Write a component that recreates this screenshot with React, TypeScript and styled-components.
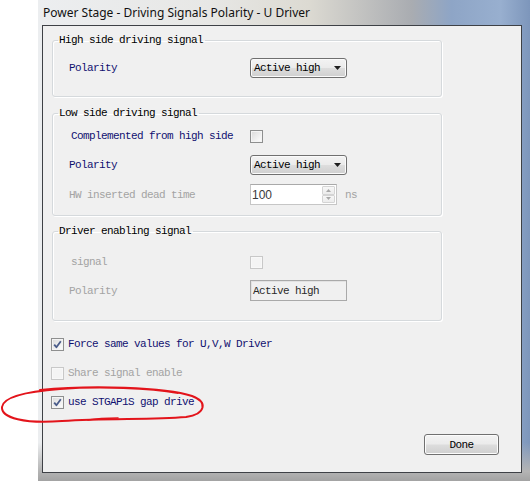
import styled, { createGlobalStyle } from "styled-components";

const GlobalStyle = createGlobalStyle`
  html, body {
    margin: 0;
    padding: 0;
    background: #ffffff;
    overflow: hidden;
  }
`;

const MONO = `"Liberation Mono", "DejaVu Sans Mono", monospace`;

export default function App() {
  return (
    <>
      <GlobalStyle />
      <Screen>
        <Window>
          <TitleBar>Power Stage - Driving Signals Polarity - U Driver</TitleBar>
          <Client>
            <GroupBox $pt={12} $pb={18}>
              <Legend>High side driving signal</Legend>
              <Rows $gap={9}>
                <Row>
                  <Label>Polarity</Label>
                  <Dropdown>
                    <span>Active high</span>
                    <Arrow />
                  </Dropdown>
                </Row>
              </Rows>
            </GroupBox>

            <GroupBox $pt={7} $pb={11} $mt={10}>
              <Legend>Low side driving signal</Legend>
              <Rows $gap={9}>
                <Row>
                  <Label $indent={2}>Complemented from high side</Label>
                  <CheckBox />
                </Row>
                <Row>
                  <Label>Polarity</Label>
                  <Dropdown>
                    <span>Active high</span>
                    <Arrow />
                  </Dropdown>
                </Row>
                <Row>
                  <Label $disabled>HW inserted dead time</Label>
                  <SpinWrap>
                    <SpinBox>
                      <SpinValue>100</SpinValue>
                      <SpinButtons>
                        <SpinButton>
                          <svg width="5" height="3" viewBox="0 0 5 3">
                            <path d="M0 3 L2.5 0 L5 3 Z" fill="#a8a8a8" />
                          </svg>
                        </SpinButton>
                        <SpinButton>
                          <svg width="5" height="3" viewBox="0 0 5 3">
                            <path d="M0 0 L2.5 3 L5 0 Z" fill="#a8a8a8" />
                          </svg>
                        </SpinButton>
                      </SpinButtons>
                    </SpinBox>
                    <Unit>ns</Unit>
                  </SpinWrap>
                </Row>
              </Rows>
            </GroupBox>

            <GroupBox $pt={15} $pb={20} $mt={9}>
              <Legend>Driver enabling signal</Legend>
              <Rows $gap={8}>
                <Row>
                  <Label $disabled $indent={2}>
                    signal
                  </Label>
                  <CheckBox $disabled />
                </Row>
                <Row>
                  <Label $disabled>Polarity</Label>
                  <ReadOnlyBox>Active high</ReadOnlyBox>
                </Row>
              </Rows>
            </GroupBox>

            <CheckList>
              <CheckRow>
                <CheckBox $checked>
                  <Tick />
                </CheckBox>
                <CheckText>Force same values for U,V,W Driver</CheckText>
              </CheckRow>
              <CheckRow>
                <CheckBox $disabled />
                <CheckText $disabled>Share signal enable</CheckText>
              </CheckRow>
              <CheckRow>
                <CheckBox $checked>
                  <Tick />
                </CheckBox>
                <CheckText>use STGAP1S gap drive</CheckText>
              </CheckRow>
            </CheckList>

            <ButtonRow>
              <Button>Done</Button>
            </ButtonRow>
          </Client>
        </Window>
        <Scribble width="210" height="50" viewBox="0 0 210 50">
          <path
            d="M40 6 C 90 1, 165 3, 192 12 C 208 18, 206 30, 186 33 C 150 36, 110 34, 62 37 C 25 40, 1 34, 2 23 C 3 14, 20 8, 60 5 C 100 2, 150 4, 178 9"
            fill="none"
            stroke="#e3141b"
            strokeWidth="2"
            strokeLinecap="round"
          />
          <path
            d="M88 36 C 100 34, 110 34, 118 34"
            fill="none"
            stroke="#e3141b"
            strokeWidth="1.6"
            strokeLinecap="round"
          />
        </Scribble>
      </Screen>
    </>
  );
}

function Arrow() {
  return (
    <svg width="7" height="4" viewBox="0 0 7 4">
      <path d="M0 0 L7 0 L3.5 4 Z" fill="#1e1e1e" />
    </svg>
  );
}

function Tick() {
  return (
    <svg width="11" height="11" viewBox="0 0 11 11">
      <path
        d="M2.2 5.6 L4.4 8.2 L8.8 2.2"
        fill="none"
        stroke="#4a5c8a"
        strokeWidth="1.8"
        strokeLinejoin="round"
      />
    </svg>
  );
}

const Screen = styled.div`
  position: relative;
  display: flex;
  width: 530px;
  height: 481px;
  padding-left: 38px;
  box-sizing: border-box;
`;

const Window = styled.div`
  display: flex;
  flex-direction: column;
  width: 492px;
  height: 481px;
  padding: 0 8px 8px 4px;
  box-sizing: border-box;
  background:
    linear-gradient(to bottom, rgba(255, 255, 255, 0) 92%, #b4b4b4 98%, #a3a3a3 100%),
    linear-gradient(
      to right,
      #eceef0 0%,
      #e7e7e5 35%,
      #dcdad2 55%,
      #c4c4c2 65%,
      #a9acb1 76%,
      #8ea5c6 84%,
      #98afcf 94%,
      #7d96bb 100%
    );
`;

const TitleBar = styled.div`
  display: flex;
  align-items: center;
  height: 25px;
  padding-left: 1px;
  font-family: "Noto Sans", "Open Sans", sans-serif;
  font-size: 12px;
  color: #111;
  white-space: nowrap;
`;

const Client = styled.div`
  display: flex;
  flex-direction: column;
  width: 480px;
  height: 448px;
  box-sizing: border-box;
  padding: 8px 22px 0 8px;
  border: 1px solid #3e4146;
  background: #f0f0f0;
  font-family: ${MONO};
  font-size: 11px;
  letter-spacing: -0.6px;
`;

const GroupBox = styled.fieldset<{ $pt: number; $pb: number; $mt?: number }>`
  width: 390px;
  box-sizing: border-box;
  margin: ${(p) => p.$mt ?? 0}px 0 0 1px;
  padding: ${(p) => p.$pt}px 0 ${(p) => p.$pb}px 0;
  border: 1px solid #d5d9dc;
  border-radius: 3px;
  box-shadow: inset 1px 1px 0 #ffffff, 1px 1px 0 #ffffff;
`;

const Legend = styled.legend`
  margin-left: 5px;
  padding: 0 2px 0 1px;
  height: 12px;
  line-height: 12px;
  color: #000;
`;

const Rows = styled.div<{ $gap: number }>`
  display: flex;
  flex-direction: column;
  gap: ${(p) => p.$gap}px;
  padding-left: 16px;
`;

const Row = styled.div`
  display: grid;
  grid-template-columns: 181px auto;
  align-items: center;
  height: 20px;
`;

const Label = styled.div<{ $disabled?: boolean; $indent?: number }>`
  padding-left: ${(p) => p.$indent ?? 0}px;
  color: ${(p) => (p.$disabled ? "#a3a3a3" : "#101070")};
  white-space: nowrap;
`;

const Dropdown = styled.div`
  display: flex;
  align-items: center;
  justify-content: space-between;
  width: 97px;
  height: 20px;
  box-sizing: border-box;
  padding: 0 5px 0 3px;
  border: 1px solid #707070;
  border-radius: 3px;
  background: linear-gradient(#f3f3f3 0%, #ebebeb 48%, #dddddd 52%, #cfcfcf 100%);
  box-shadow: inset 0 0 0 1px #fbfbfb;
  color: #000;
`;

const ReadOnlyBox = styled.div`
  display: flex;
  align-items: center;
  width: 97px;
  height: 21px;
  box-sizing: border-box;
  padding-left: 2px;
  border: 1px solid #a9a9a9;
  background: #f0f0f0;
  box-shadow: inset 1px 1px 0 #e2e2e2;
  color: #2a2a2a;
`;

const SpinWrap = styled.div`
  display: flex;
  align-items: center;
  gap: 8px;
`;

const SpinBox = styled.div`
  display: flex;
  width: 87px;
  height: 21px;
  box-sizing: border-box;
  border: 1px solid #c6c6c6;
  border-top-color: #a9a9a9;
  background: #ffffff;
`;

const SpinValue = styled.div`
  flex: 1;
  display: flex;
  align-items: center;
  padding-left: 1px;
  font-family: "Liberation Sans", Arial, sans-serif;
  font-size: 12px;
  letter-spacing: 0;
  color: #3a3a3a;
`;

const SpinButtons = styled.div`
  display: flex;
  flex-direction: column;
  width: 14px;
  padding: 1px 1px 1px 0;
  box-sizing: border-box;
`;

const SpinButton = styled.div`
  flex: 1;
  display: flex;
  align-items: center;
  justify-content: center;
  border: 1px solid #d4d4d4;
  border-radius: 1px;
  background: linear-gradient(#f7f7f7, #ececec);
`;

const Unit = styled.span`
  color: #a3a3a3;
`;

const CheckBox = styled.div<{ $checked?: boolean; $disabled?: boolean }>`
  display: flex;
  align-items: center;
  justify-content: center;
  width: 13px;
  height: 13px;
  box-sizing: border-box;
  border: 1px solid ${(p) => (p.$disabled ? "#c8c8c8" : "#8e8f8f")};
  background: ${(p) =>
    p.$disabled
      ? "#f4f4f4"
      : "linear-gradient(135deg, #dadada 0%, #f0f0f0 60%, #ffffff 100%)"};
  box-shadow: inset 0 0 0 1px ${(p) => (p.$disabled ? "#f8f8f8" : "#f4f4f4")};
`;

const CheckList = styled.div`
  display: flex;
  flex-direction: column;
  gap: 9px;
  margin-top: 13px;
`;

const CheckRow = styled.div`
  display: flex;
  align-items: center;
  gap: 4px;
  height: 20px;
`;

const CheckText = styled.span<{ $disabled?: boolean }>`
  color: ${(p) => (p.$disabled ? "#a3a3a3" : "#101070")};
  white-space: nowrap;
`;

const ButtonRow = styled.div`
  display: flex;
  justify-content: flex-end;
  margin-top: 22px;
`;

const Button = styled.div`
  display: flex;
  align-items: center;
  justify-content: center;
  width: 75px;
  height: 21px;
  box-sizing: border-box;
  border: 1px solid #707070;
  border-radius: 3px;
  background: linear-gradient(#f3f3f3 0%, #ebebeb 48%, #dddddd 52%, #cfcfcf 100%);
  box-shadow: inset 0 0 0 1px #fcfcfc;
  color: #000;
`;

const Scribble = styled.svg`
  position: absolute;
  left: 0;
  top: 384px;
  pointer-events: none;
`;
